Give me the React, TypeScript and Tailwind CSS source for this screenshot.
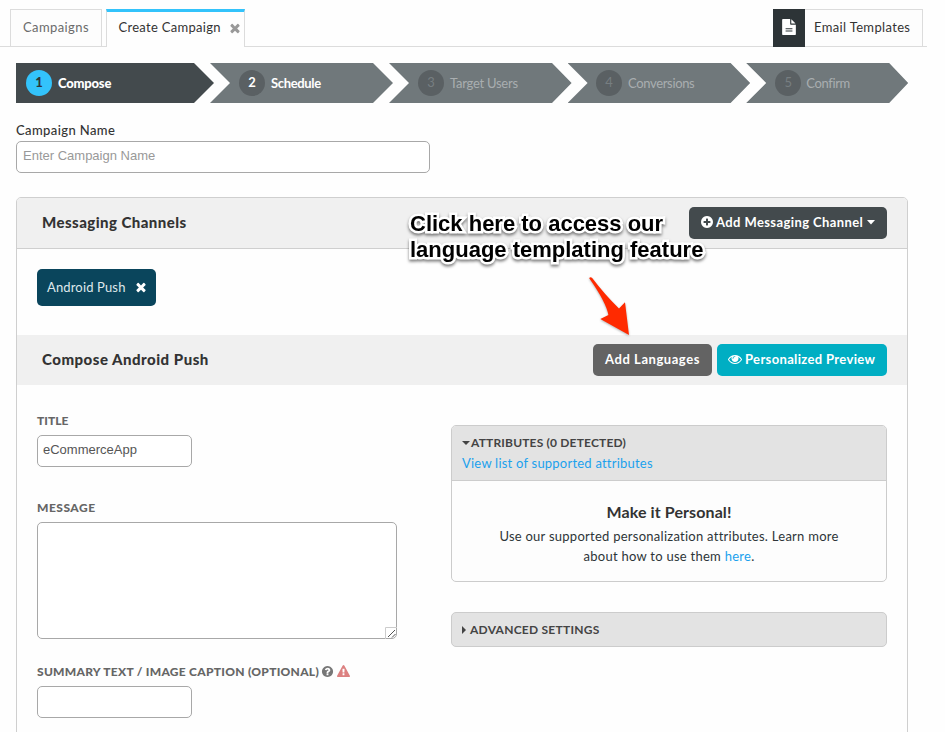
import React from "react";

const icons = {
  times:
    "M1490 1322q0 40-28 68l-136 136q-28 28-68 28t-68-28l-294-294-294 294q-28 28-68 28t-68-28l-136-136q-28-28-28-68t28-68l294-294-294-294q-28-28-28-68t28-68l136-136q28-28 68-28t68 28l294 294 294-294q28-28 68-28t68 28l136 136q28 28 28 68t-28 68l-294 294 294 294q28 28 28 68z",
  plusCircle:
    "M1344 960v-128q0-26-19-45t-45-19h-256v-256q0-26-19-45t-45-19h-128q-26 0-45 19t-19 45v256h-256q-26 0-45 19t-19 45v128q0 26 19 45t45 19h256v256q0 26 19 45t45 19h128q26 0 45-19t19-45v-256h256q26 0 45-19t19-45zm320-64q0 209-103 385.5t-279.5 279.5-385.5 103-385.5-103-279.5-279.5-103-385.5 103-385.5 279.5-279.5 385.5-103 385.5 103 279.5 279.5 103 385.5z",
  eye: "M1664 960q-152-236-381-353 61 104 61 225 0 185-131.5 316.5t-316.5 131.5-316.5-131.5-131.5-316.5q0-121 61-225-229 117-381 353 133 205 333.5 326.5t434.5 121.5 434.5-121.5 333.5-326.5zm-720-384q0-20-14-34t-34-14q-125 0-214.5 89.5t-89.5 214.5q0 20 14 34t34 14 34-14 14-34q0-86 61-147t147-61q20 0 34-14t14-34zm848 384q0 34-20 69-140 230-376.5 368.5t-499.5 138.5-499.5-139-376.5-368q-20-35-20-69t20-69q140-229 376.5-368t499.5-139 499.5 139 376.5 368q20 35 20 69z",
  question:
    "M1024 1376v-192q0-14-9-23t-23-9h-192q-14 0-23 9t-9 23v192q0 14 9 23t23 9h192q14 0 23-9t9-23zm256-672q0-88-55.5-163t-138.5-116-170-41q-243 0-371 213-15 24 8 42l132 100q7 6 19 6 16 0 25-12 53-68 86-92 34-24 86-24 48 0 85.5 26t37.5 59q0 38-20 61t-68 45q-63 28-115.5 86.5t-52.5 125.5v36q0 14 9 23t23 9h192q14 0 23-9t9-23q0-19 21.5-49.5t54.5-49.5q32-18 49-28.5t46-35 44.5-48 28-60.5 12.5-81zm384 192q0 209-103 385.5t-279.5 279.5-385.5 103-385.5-103-279.5-279.5-103-385.5 103-385.5 279.5-279.5 385.5-103 385.5 103 279.5 279.5 103 385.5z",
  warning:
    "M1024 1375v-190q0-14-9.5-23.5t-22.5-9.5h-192q-13 0-22.5 9.5t-9.5 23.5v190q0 14 9.5 23.5t22.5 9.5h192q13 0 22.5-9.5t9.5-23.5zm-2-374l18-459q0-12-10-19-13-11-24-11h-220q-11 0-24 11-10 7-10 21l17 457q0 10 10 16.5t24 6.5h185q14 0 23.5-6.5t10.5-16.5zm-14-934l768 1408q35 63-2 126-17 29-46.5 46t-63.5 17h-1536q-34 0-63.5-17t-46.5-46q-37-63-2-126l768-1408q17-31 47-49t65-18 65 18 47 49z",
  file: "M1596 476q14 14 28 36h-472v-472q22 14 36 28zm-476 164h544v1056q0 40-28 68t-68 28h-1344q-40 0-68-28t-28-68v-1600q0-40 28-68t68-28h800v544q0 40 28 68t68 28zm160 736v-64q0-14-9-23t-23-9h-704q-14 0-23 9t-9 23v64q0 14 9 23t23 9h704q14 0 23-9t9-23zm0-256v-64q0-14-9-23t-23-9h-704q-14 0-23 9t-9 23v64q0 14 9 23t23 9h704q14 0 23-9t9-23zm0-320v64q0 14-9 23t-23 9h-704q-14 0-23-9t-9-23v-64q0-14 9-23t23-9h704q14 0 23 9t9 23z",
};

function Icon({ name, className }: { name: keyof typeof icons; className: string }) {
  return (
    <svg viewBox="0 0 1792 1792" fill="currentColor" className={`shrink-0 ${className}`}>
      <path d={icons[name]} />
    </svg>
  );
}

const steps = [
  { n: 1, label: "Compose", shape: "w-[198px] pl-2.5 bg-[#434a4d] [clip-path:polygon(0_0,178px_0,100%_50%,178px_100%,0_100%)]", dot: "bg-[#33c3fb] text-[#2d3538] font-black", text: "ml-1.5 text-white font-black tracking-[-0.2px]" },
  { n: 2, label: "Schedule", shape: "w-[183px] -ml-1 pl-[29px] bg-[#70787b] [clip-path:polygon(0_0,163px_0,100%_50%,163px_100%,0_100%,20px_50%)]", dot: "bg-[#5a6063] text-white font-bold", text: "ml-1.5 text-white font-bold tracking-[-0.35px]" },
  { n: 3, label: "Target Users", shape: "w-[182.6px] -ml-1 pl-[29px] bg-[#70787b] [clip-path:polygon(0_0,163px_0,100%_50%,163px_100%,0_100%,20px_50%)]", dot: "bg-[#5a6063] text-[#777e81]", text: "ml-1.5 text-[#a9aeb0] tracking-[-0.25px]" },
  { n: 4, label: "Conversions", shape: "w-[182.6px] -ml-1 pl-[28.5px] bg-[#70787b] [clip-path:polygon(0_0,163px_0,100%_50%,163px_100%,0_100%,20px_50%)]", dot: "bg-[#5a6063] text-[#777e81]", text: "ml-1.5 text-[#a9aeb0] tracking-[-0.35px]" },
  { n: 5, label: "Confirm", shape: "w-[162px] -ml-1 pl-[29px] bg-[#70787b] [clip-path:polygon(0_0,143px_0,100%_50%,143px_100%,0_100%,20px_50%)]", dot: "bg-[#5a6063] text-[#777e81]", text: "ml-[5px] text-[#a9aeb0] tracking-[-0.35px]" },
];

function Tabs() {
  return (
    <div className="flex h-[47px] w-[927px] items-end">
      <div className="h-px w-2.5 bg-[#dcdcdc]" />
      <div className="flex h-[38px] w-[92px] items-center border border-[#dcdcdc] bg-[#fdfdfd] pl-3 text-[13px] tracking-[0.4px] text-[#6b6b6b]">
        Campaigns
      </div>
      <div className="h-px w-1 bg-[#dcdcdc]" />
      <div className="flex h-[38px] w-[139px] items-center border-x border-t-[3px] border-x-[#dcdcdc] border-t-[#33c3fb] pb-1 pl-[11.5px] text-[13px] tracking-[0.3px] text-[#333]">
        <span className="w-[109px] whitespace-nowrap">Create Campaign</span>
        <Icon name="times" className="size-[14px] text-[#999]" />
      </div>
      <div className="h-px flex-1 bg-[#dcdcdc]" />
      <div className="flex h-[38px] w-8 items-center justify-center bg-[#2d3437] text-white">
        <Icon name="file" className="mb-0.5 size-4" />
      </div>
      <div className="flex h-[38px] w-[118px] items-center border border-l-0 border-[#dcdcdc] bg-[#fdfdfd] pl-[9px] text-[13px] tracking-[0.35px] text-[#333]">
        Email Templates
      </div>
      <div className="h-px w-1 bg-[#dcdcdc]" />
    </div>
  );
}

function Annotation() {
  return (
    <>
      <div className="absolute left-[410px] top-[211px] font-['Liberation_Sans',Arial,sans-serif] text-[22px] font-bold leading-[26px] text-black whitespace-nowrap [-webkit-text-stroke:5px_white] [paint-order:stroke_fill] [stroke-linejoin:round] drop-shadow-[0_2px_1.5px_rgba(0,0,0,0.5)]">
        <div>Click here to access our</div>
        <div>language templating feature</div>
      </div>
      <svg className="absolute left-[580px] top-[270px] drop-shadow-[0_1px_1px_rgba(0,0,0,0.3)]" width="60" height="72" viewBox="580 270 60 72">
        <path d="M589.2 278.2Q590 276.6 592 277.8Q605 295 619 308.5L625 302.3L629 335L600.3 319L608.4 315Q606 302 589.2 278.2Z" fill="#ff2a00" />
      </svg>
    </>
  );
}

export default function App() {
  return (
    <div className="relative h-[732px] w-[945px] overflow-hidden bg-[#fefefe] font-['Lato',sans-serif] text-[#333]">
      <Tabs />
      <div className="mt-4 ml-4 flex h-10">
        {steps.map((s) => (
          <div key={s.n} className={`flex shrink-0 items-center text-[13px] whitespace-nowrap ${s.shape}`}>
            <span className={`flex size-[26px] items-center justify-center rounded-full ${s.dot}`}>{s.n}</span>
            <span className={`pt-px ${s.text}`}>{s.label}</span>
          </div>
        ))}
      </div>

      <div className="ml-4 mt-[17px] w-[414px]">
        <div className="h-[21px] text-[13px] font-medium leading-5 tracking-[0.4px] text-[#333]">Campaign Name</div>
        <div className="h-8 rounded-[5px] border border-[#a8a8a8] bg-white pl-1.5 font-['Liberation_Sans',Arial,sans-serif] text-[13px] leading-7 text-[#999]">
          Enter Campaign Name
        </div>
      </div>

      <div className="ml-4 mt-6 h-[560px] w-[892px] rounded-[5px] border border-[#cfcfcf]">
        <div className="flex h-[51px] items-center justify-between rounded-t-[4px] border-b border-[#cfcfcf] bg-[#f0f0f0] pl-[25px] pr-5">
          <h2 className="pb-0.5 text-[15px] font-black tracking-[0.45px]">Messaging Channels</h2>
          <button className="flex h-8 w-[198px] items-center rounded-[5px] bg-[#434a4d] pl-[11px] text-[13px] font-bold tracking-[0.4px] text-white">
            <Icon name="plusCircle" className="mr-0.5 mb-0.5 size-[14px]" />
            <span className="whitespace-nowrap">Add Messaging Channel</span>
            <svg className="ml-1 mb-px h-[5px] w-2" viewBox="0 0 8 5" fill="currentColor"><path d="M0 0h8L4 4.5z" /></svg>
          </button>
        </div>
        <div className="h-[86px] pl-5 pt-5">
          <div className="flex h-[37px] w-[119px] items-center rounded-[5px] bg-[#0a455c] pl-2.5 text-[13px] tracking-[0.15px] text-[#dfe8eb]">
            <span className="w-[87px] whitespace-nowrap">Android Push</span>
            <Icon name="times" className="mb-0.5 size-[14px] text-white" />
          </div>
        </div>
        <div className="flex h-[50px] items-center bg-[#f0f0f0] pl-[25px] pr-5">
          <h2 className="flex-1 pb-0.5 text-[15px] font-black tracking-[0.5px]">Compose Android Push</h2>
          <button className="mr-[5px] h-8 w-[119px] rounded-[5px] bg-[#636363] text-[13px] font-bold tracking-[0.55px] text-white">
            Add Languages
          </button>
          <button className="flex h-8 w-[170px] items-center rounded-[5px] bg-[#00aec3] pl-[11px] text-[13px] font-bold tracking-[0.35px] text-white">
            <Icon name="eye" className="mr-[3px] mb-0.5 size-[14px]" />
            <span className="whitespace-nowrap">Personalized Preview</span>
          </button>
        </div>

        <div className="flex pl-5">
          <div className="w-[414px] pt-[26px] text-xs font-black text-[#666]">
            <div className="h-6 leading-5">TITLE</div>
            <div className="h-8 w-[155px] rounded-[5px] border border-[#a8a8a8] bg-white pl-[5px] font-['Liberation_Sans',Arial,sans-serif] text-[13px] font-normal leading-7 text-[#555]">
              eCommerceApp
            </div>
            <div className="mt-[31px] h-6 leading-5 tracking-[0.5px]">MESSAGE</div>
            <div className="relative h-[117px] w-[360px] rounded-[5px] border border-[#a8a8a8] bg-white">
              <svg className="absolute -bottom-px -right-px" width="12" height="12" viewBox="0 0 12 12" fill="none">
                <path d="M0.5 12V0.5H12" stroke="#ccc" />
                <path d="M3 10L10 3M7 10.5L10.5 7" stroke="#555" />
              </svg>
            </div>
            <div className="mt-[23px] flex h-6 items-start leading-5">
              <span className="w-[284px] whitespace-nowrap tracking-[0.28px]">SUMMARY TEXT / IMAGE CAPTION (OPTIONAL)</span>
              <Icon name="question" className="mt-[3px] size-[13px] text-[#777]" />
              <Icon name="warning" className="ml-[3px] mt-[3px] size-[13px] text-[#dc8080]" />
            </div>
            <div className="h-8 w-[155px] rounded-[5px] border border-[#a8a8a8] bg-white" />
          </div>

          <div className="w-[436px] pt-10">
            <div className="h-[157px] overflow-hidden rounded-[5px] border border-[#ccc] bg-[#fdfdfd]">
              <div className="h-[55px] border-b border-[#ccc] bg-[#e3e3e3] pl-2.5 pt-[7px]">
                <div className="flex h-5 items-center text-xs font-bold tracking-[0.18px] text-[#444]">
                  <svg className="mr-[1px] h-1 w-2" viewBox="0 0 8 4" fill="currentColor"><path d="M0 0h8L4 4z" /></svg>
                  ATTRIBUTES (0 DETECTED)
                </div>
                <div className="text-[13px] leading-[21px] tracking-[0.22px] text-[#1ba1ed]">View list of supported attributes</div>
              </div>
              <div className="pt-5 text-center text-[13px] leading-5 tracking-[0.26px] text-[#2d3538]">
                <div className="text-base font-bold leading-[22px] tracking-[0.1px] text-[#333]">Make it Personal!</div>
                <div className="mt-[3px]">Use our supported personalization attributes. Learn more</div>
                <div>about how to use them <span className="text-[#1ba1ed]">here</span>.</div>
              </div>
            </div>
            <div className="mt-[30px] flex h-[35px] items-center rounded-[5px] border border-[#ccc] bg-[#e3e3e3] pl-2.5 text-xs font-bold tracking-[0.25px] text-[#444]">
              <svg className="mr-1 h-2 w-1" viewBox="0 0 4 8" fill="currentColor"><path d="M0 0v8l4-4z" /></svg>
              ADVANCED SETTINGS
            </div>
          </div>
        </div>
      </div>
      <Annotation />
    </div>
  );
}
